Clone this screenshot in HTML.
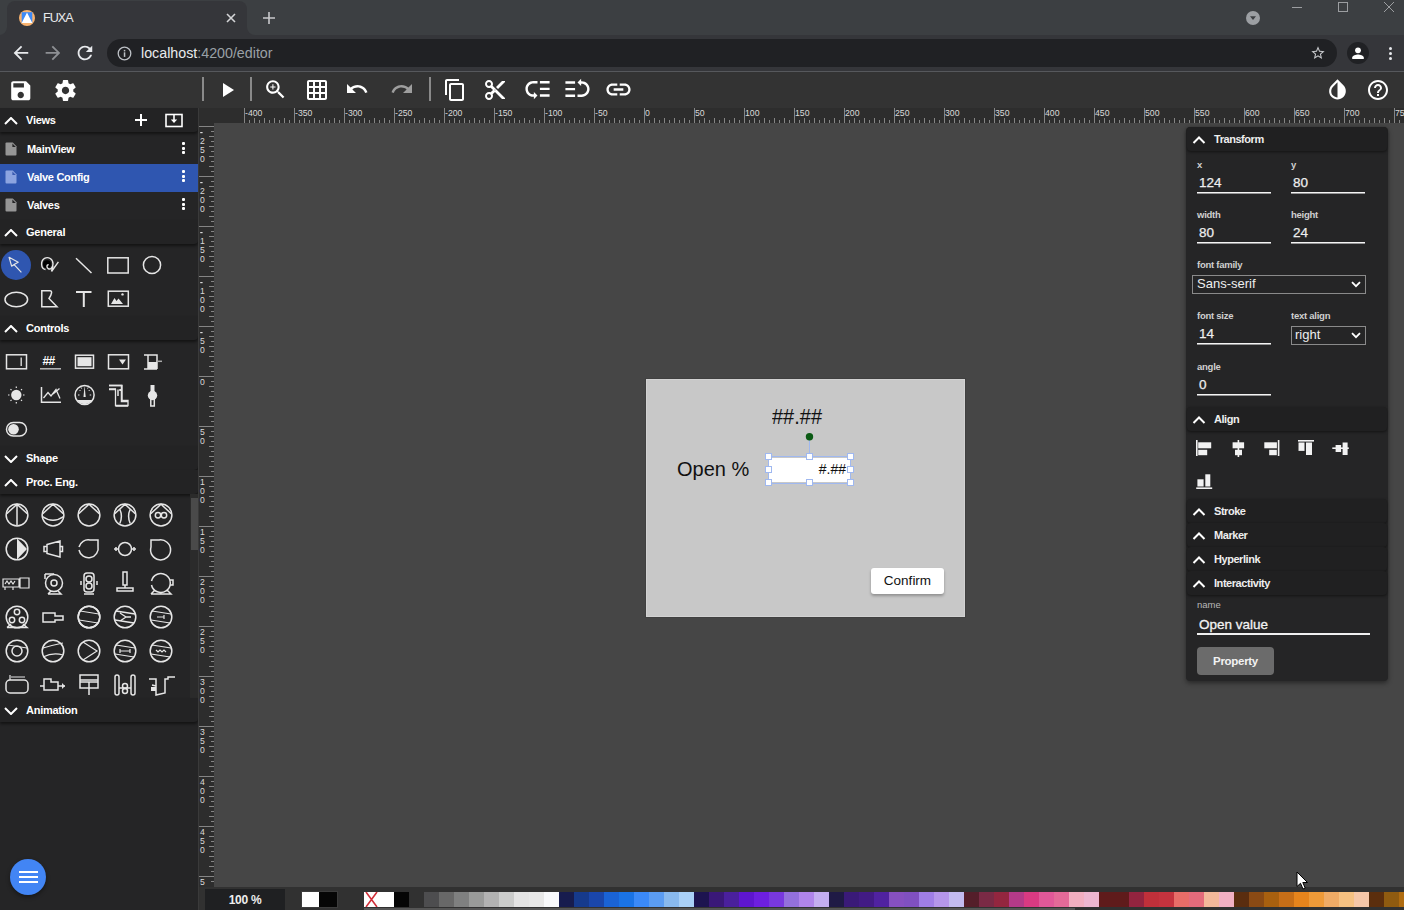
<!DOCTYPE html>
<html><head><meta charset="utf-8">
<style>
*{box-sizing:border-box;margin:0;padding:0}
html,body{width:1404px;height:910px;overflow:hidden;background:#464646;font-family:"Liberation Sans",sans-serif;}
.a{position:absolute}
#tabstrip{left:0;top:0;width:1404px;height:35px;background:#3c3f42}
#tab{left:7px;top:1px;width:240px;height:34px;background:#35363a;border-radius:8px 8px 0 0}
#addrrow{left:0;top:35px;width:1404px;height:36px;background:#35363a}
#omni{left:107px;top:39px;width:1230px;height:28px;background:#202124;border-radius:14px}
#sepline{left:0;top:71px;width:1404px;height:1px;background:#56585c}
#header{left:0;top:72px;width:1404px;height:36px;background:#333333}
#sidebar{left:0;top:108px;width:198px;height:802px;background:#252526}
#vline{left:198px;top:108px;width:1px;height:802px;background:#3c3c3c}
#hruler{left:199px;top:108px;width:1205px;height:15px;background:#2e2e2e}
#vruler{left:199px;top:123px;width:15px;height:765px;background:#2e2e2e}
#bottombar{left:199px;top:888px;width:1205px;height:22px;background:#2e2e2e}
.ico{position:absolute;fill:#fff}
.hdr{position:absolute;left:0;width:198px;height:24px;background:#232324;color:#fff;font-weight:bold;font-size:11px;letter-spacing:-0.25px;box-shadow:0 2px 3px rgba(0,0,0,.5);border-radius:0 0 4px 0}
.hdr span{position:absolute;left:26px;top:6px}
.hdr svg{position:absolute;left:4px;top:6px}
.row{position:absolute;left:0;width:198px;height:28px;color:#fff;font-size:11px;font-weight:bold;letter-spacing:-0.3px}
.row span{position:absolute;left:27px;top:7px}
</style></head><body>

<div id="tabstrip" class="a"></div>
<div id="tab" class="a"></div>
<div id="addrrow" class="a"></div>
<div id="omni" class="a"></div>
<div id="sepline" class="a"></div>

<!-- chrome -->
<svg class="a" style="left:247px;top:27px" width="8" height="8"><path d="M0 0 A8 8 0 0 0 8 8 L0 8Z" fill="#35363a"/></svg>
<svg class="a" style="left:-1px;top:27px" width="8" height="8"><path d="M8 0 A8 8 0 0 1 0 8 L8 8Z" fill="#35363a"/></svg>
<svg class="a" style="left:18px;top:9px" width="18" height="18" viewBox="0 0 18 18">
<circle cx="9" cy="9" r="8" fill="#f9b36f"/>
<rect x="3.7" y="3.2" width="10.6" height="10.8" fill="#3d8af7"/>
<path d="M9 3.6 L14.3 14 L3.7 14Z" fill="#fff"/>
</svg>
<div class="a" style="left:43px;top:11px;font-size:12.6px;color:#e8eaed;letter-spacing:-1px">FUXA</div>
<svg class="a" style="left:226px;top:13px" width="10" height="10" viewBox="0 0 10 10"><path d="M1 1L9 9M9 1L1 9" stroke="#d4d5d7" stroke-width="1.6"/></svg>
<svg class="a" style="left:262px;top:11px" width="14" height="14" viewBox="0 0 14 14"><path d="M7 1V13M1 7H13" stroke="#c8c9cb" stroke-width="1.6"/></svg>
<svg class="a" style="left:1245px;top:10px" width="16" height="16" viewBox="0 0 16 16"><circle cx="8" cy="8" r="7" fill="#9c9fa3"/><path d="M5 6.3H11L8 10Z" fill="#3c3f42"/></svg>
<div class="a" style="left:1292px;top:7px;width:10px;height:1px;background:#9c9ea1"></div>
<div class="a" style="left:1338px;top:2px;width:10px;height:10px;border:1px solid #9c9ea1"></div>
<svg class="a" style="left:1383px;top:1px" width="12" height="12" viewBox="0 0 12 12"><path d="M1 1L11 11M11 1L1 11" stroke="#9c9ea1" stroke-width="1"/></svg>
<!-- nav -->
<svg class="a" style="left:9.85px;top:42.05px" width="21.9" height="21.9" viewBox="0 0 24 24"><path d="M20 11H7.83l5.59-5.59L12 4l-8 8 8 8 1.41-1.41L7.83 13H20v-2z" fill="#e8eaed"/></svg>
<svg class="a" style="left:42.35px;top:42.05px" width="21.9" height="21.9" viewBox="0 0 24 24"><path d="M12 4l-1.41 1.41L16.17 11H4v2h12.17l-5.58 5.59L12 20l8-8z" fill="#8e9094"/></svg>
<svg class="a" style="left:73.95px;top:42.05px" width="21.9" height="21.9" viewBox="0 0 24 24"><path d="M17.65 6.35C16.2 4.9 14.21 4 12 4c-4.42 0-7.99 3.58-7.99 8s3.57 8 7.99 8c3.73 0 6.84-2.55 7.73-6h-2.08c-.82 2.33-3.04 4-5.65 4-3.31 0-6-2.69-6-6s2.69-6 6-6c1.66 0 3.14.69 4.22 1.78L13 11h7V4l-2.35 2.35z" fill="#e8eaed"/></svg>
<svg class="a" style="left:117px;top:46px" width="15" height="15" viewBox="0 0 15 15"><circle cx="7.5" cy="7.5" r="6.3" fill="none" stroke="#bdc1c6" stroke-width="1.3"/><rect x="6.8" y="6.3" width="1.5" height="4.6" fill="#bdc1c6"/><rect x="6.8" y="3.9" width="1.5" height="1.5" fill="#bdc1c6"/></svg>
<div class="a" style="left:141px;top:45px;font-size:14.25px;color:#e8eaed;letter-spacing:0px">localhost<span style="color:#9aa0a6">:4200/editor</span></div>
<svg class="a" style="left:1310px;top:45px" width="16" height="16" viewBox="0 0 24 24"><path d="M22 9.24l-7.19-.62L12 2 9.19 8.63 2 9.24l5.46 4.73L5.82 21 12 17.27 18.18 21l-1.63-7.03L22 9.24zM12 15.4l-3.76 2.27 1-4.28-3.32-2.88 4.38-.38L12 6.1l1.71 4.04 4.38.38-3.32 2.88 1 4.28L12 15.4z" fill="#c6c8cb"/></svg>
<div class="a" style="left:1347px;top:42px;width:22px;height:22px;border-radius:50%;background:#202124"></div>
<svg class="a" style="left:1350px;top:45px" width="16" height="16" viewBox="0 0 16 16"><circle cx="8" cy="5.3" r="2.9" fill="#fff"/><path d="M2.2 12.6c0-2 3.8-3.2 5.8-3.2s5.8 1.2 5.8 3.2V14H2.2z" fill="#fff"/></svg>
<div class="a" style="left:1389px;top:47px;width:3px;height:3px;border-radius:50%;background:#e8eaed"></div>
<div class="a" style="left:1389px;top:52px;width:3px;height:3px;border-radius:50%;background:#e8eaed"></div>
<div class="a" style="left:1389px;top:57px;width:3px;height:3px;border-radius:50%;background:#e8eaed"></div>
<div id="header" class="a"></div>
<!-- header -->
<svg class="a" style="left:8.2px;top:77.8px" width="25.5" height="25.5" viewBox="0 0 24 24"><path d="M17 3H5c-1.11 0-2 .9-2 2v14c0 1.1.89 2 2 2h14c1.1 0 2-.9 2-2V7l-4-4zm-5 16c-1.66 0-3-1.34-3-3s1.34-3 3-3 3 1.34 3 3-1.34 3-3 3zm3-10H5V5h10v4z" fill="#fff" /></svg>
<svg class="a" style="left:52.5px;top:77.5px" width="25" height="25" viewBox="0 0 24 24"><path d="M19.43 12.98c.04-.32.07-.64.07-.98s-.03-.66-.07-.98l2.11-1.65c.19-.15.24-.42.12-.64l-2-3.46c-.12-.22-.39-.3-.61-.22l-2.49 1c-.52-.4-1.08-.73-1.69-.98l-.38-2.65C14.46 2.18 14.25 2 14 2h-4c-.25 0-.46.18-.49.42l-.38 2.65c-.61.25-1.17.59-1.69.98l-2.49-1c-.23-.09-.49 0-.61.22l-2 3.46c-.13.22-.07.49.12.64l2.11 1.65c-.04.32-.07.65-.07.98s.03.66.07.98l-2.11 1.65c-.19.15-.24.42-.12.64l2 3.46c.12.22.39.3.61.22l2.49-1c.52.4 1.08.73 1.69.98l.38 2.65c.03.24.24.42.49.42h4c.25 0 .46-.18.49-.42l.38-2.65c.61-.25 1.17-.59 1.69-.98l2.49 1c.23.09.49 0 .61-.22l2-3.46c.12-.22.07-.49-.12-.64l-2.11-1.65zM12 15.5c-1.93 0-3.5-1.57-3.5-3.5s1.57-3.5 3.5-3.5 3.5 1.57 3.5 3.5-1.57 3.5-3.5 3.5z" fill="#fff" /></svg>
<div class="a" style="left:202px;top:77px;width:2px;height:24px;background:#8a8a8a"></div>
<svg class="a" style="left:215px;top:78px" width="24" height="24" viewBox="0 0 24 24"><path d="M8 5v14l11-7z" fill="#fff" /></svg>
<div class="a" style="left:250px;top:77px;width:2px;height:24px;background:#8a8a8a"></div>
<svg class="a" style="left:263px;top:77px" width="25" height="25" viewBox="0 0 24 24"><path d="M15.5 14h-.79l-.28-.27C15.41 12.59 16 11.11 16 9.5 16 5.91 13.09 3 9.5 3S3 5.91 3 9.5 5.91 16 9.5 16c1.61 0 3.09-.59 4.23-1.57l.27.28v.79l5 4.99L20.49 19l-4.99-5zm-6 0C7.01 14 5 11.990 5 9.5S7.01 5 9.5 5 14 7.01 14 9.5 11.99 14 9.5 14zm2.5-4h-2v2H9v-2H7V9h2V7h1v2h2v1z" fill="#fff" /></svg>
<svg class="a" style="left:305px;top:78px" width="24" height="24" viewBox="0 0 24 24"><path d="M20 2H4c-1.1 0-2 .9-2 2v16c0 1.1.9 2 2 2h16c1.1 0 2-.9 2-2V4c0-1.1-.9-2-2-2zM8 20H4v-4h4v4zm0-6H4v-4h4v4zm0-6H4V4h4v4zm6 12h-4v-4h4v4zm0-6h-4v-4h4v4zm0-6h-4V4h4v4zm6 12h-4v-4h4v4zm0-6h-4v-4h4v4zm0-6h-4V4h4v4z" fill="#fff" /></svg>
<svg class="a" style="left:345px;top:77px" width="24" height="24" viewBox="0 0 24 24"><path d="M12.5 8c-2.65 0-5.05.99-6.9 2.6L2 7v9h9l-3.62-3.62c1.39-1.16 3.16-1.88 5.12-1.88 3.54 0 6.55 2.31 7.6 5.5l2.37-.78C21.08 11.03 17.15 8 12.5 8z" fill="#fff" /></svg>
<svg class="a" style="left:390px;top:77px" width="24" height="24" viewBox="0 0 24 24"><path d="M18.4 10.6C16.55 8.99 14.15 8 11.5 8c-4.65 0-8.58 3.03-9.96 7.22L3.9 16c1.05-3.19 4.05-5.5 7.6-5.5 1.95 0 3.73.72 5.12 1.88L13 16h9V7l-3.6 3.6z" fill="#9e9e9e" /></svg>
<div class="a" style="left:429px;top:77px;width:2px;height:24px;background:#8a8a8a"></div>
<svg class="a" style="left:443px;top:78px" width="24" height="24" viewBox="0 0 24 24"><path d="M16 1H4c-1.1 0-2 .9-2 2v14h2V3h12V1zm3 4H8c-1.1 0-2 .9-2 2v14c0 1.1.9 2 2 2h11c1.1 0 2-.9 2-2V7c0-1.1-.9-2-2-2zm0 16H8V7h11v14z" fill="#fff" /></svg>
<svg class="a" style="left:483px;top:78px" width="24" height="24" viewBox="0 0 24 24"><path d="M9.64 7.64c.23-.5.36-1.05.36-1.64 0-2.21-1.79-4-4-4S2 3.79 2 6s1.79 4 4 4c.59 0 1.14-.13 1.64-.36L10 12l-2.36 2.36C7.14 14.13 6.59 14 6 14c-2.21 0-4 1.79-4 4s1.79 4 4 4 4-1.79 4-4c0-.59-.13-1.14-.36-1.64L12 14l7 7h3v-1L9.64 7.64zM6 8c-1.1 0-2-.89-2-2s.9-2 2-2 2 .89 2 2-.9 2-2 2zm0 12c-1.1 0-2-.89-2-2s.9-2 2-2 2 .89 2 2-.9 2-2 2zm6-7.5c-.28 0-.5-.22-.5-.5s.22-.5.5-.5.5.22.5.5-.22.5-.5.5zM19 3l-6 6 2 2 7-7V3z" fill="#fff" /></svg>
<svg class="a" style="left:523px;top:75px" width="29" height="29" viewBox="0 0 24 24"><path d="M14 5h8v2h-8zm0 5.5h8v2h-8zm0 5.5h8v2h-8zM2 11.5C2 15.08 4.92 18 8.5 18H9v2l3-3-3-3v2h-.5C6.02 16 4 13.98 4 11.5S6.02 7 8.5 7H12V5H8.5C4.92 5 2 7.92 2 11.5z" fill="#fff" /></svg>
<svg class="a" style="left:563px;top:74px;transform:rotate(180deg)" width="29" height="29" viewBox="0 0 24 24"><path d="M14 5h8v2h-8zm0 5.5h8v2h-8zm0 5.5h8v2h-8zM2 11.5C2 15.08 4.92 18 8.5 18H9v2l3-3-3-3v2h-.5C6.02 16 4 13.98 4 11.5S6.02 7 8.5 7H12V5H8.5C4.92 5 2 7.92 2 11.5z" fill="#fff"/></svg>
<svg class="a" style="left:604px;top:75px" width="29" height="29" viewBox="0 0 24 24"><path d="M3.9 12c0-1.71 1.39-3.1 3.1-3.1h4V7H7c-2.76 0-5 2.24-5 5s2.240 5 5 5h4v-1.9H7c-1.71 0-3.1-1.39-3.1-3.1zM8 13h8v-2H8v2zm9-6h-4v1.9h4c1.71 0 3.1 1.39 3.1 3.1s-1.39 3.1-3.1 3.1h-4V17h4c2.76 0 5-2.24 5-5s-2.24-5-5-5z" fill="#fff" /></svg>
<svg class="a" style="left:1325px;top:77px" width="25" height="25" viewBox="0 0 24 24"><path d="M17.66 7.93L12 2.27 6.34 7.93c-3.12 3.12-3.12 8.19 0 11.31C7.9 20.8 9.95 21.58 12 21.58c2.05 0 4.1-.78 5.66-2.34 3.12-3.12 3.12-8.19 0-11.31zM12 19.59c-1.6 0-3.11-.62-4.24-1.76C6.62 16.69 6 15.19 6 13.59s.62-3.11 1.76-4.24L12 5.1v14.49z" fill="#fff" /></svg>
<svg class="a" style="left:1366px;top:78px" width="24" height="24" viewBox="0 0 24 24"><path d="M11 18h2v-2h-2v2zm1-16C6.48 2 2 6.48 2 12s4.48 10 10 10 10-4.48 10-10S17.52 2 12 2zm0 18c-4.41 0-8-3.59-8-8s3.59-8 8-8 8 3.59 8 8-3.59 8-8 8zm0-14c-2.21 0-4 1.79-4 4h2c0-1.1.9-2 2-2s2 .9 2 2c0 2-3 1.75-3 5h2c0-2.25 3-2.5 3-5 0-2.21-1.79-4-4-4z" fill="#fff" /></svg>
<!-- sidebar -->
<div id="sidebar" class="a"></div>
<div class="a hdr" style="top:108px"><svg class="a" style="left:0;top:9px" width="22" height="8" viewBox="0 0 22 8"><path d="M5 7 L11 1 L17 7" fill="none" stroke="#fff" stroke-width="2"/></svg><span>Views</span><svg class="a" style="left:134px;top:5px" width="14" height="14" viewBox="0 0 14 14"><path d="M7 1V13M1 7H13" stroke="#fff" stroke-width="2"/></svg><svg class="a" style="left:164px;top:5px" width="20" height="15" viewBox="0 0 20 15"><rect x="2" y="1.5" width="16" height="12" fill="none" stroke="#fff" stroke-width="1.6"/><path d="M10 1V9" stroke="#fff" stroke-width="1.6"/><path d="M6.8 6.5H13.2L10 10Z" fill="#fff"/></svg></div>
<div class="row" style="top:136px;"><svg class="a" style="left:5px;top:6px" width="12" height="14" viewBox="0 0 12 14"><path d="M1.5 0.5H7.8L11.5 4.2V12.5Q11.5 13.5 10.5 13.5H1.5Q0.5 13.5 0.5 12.5V1.5Q0.5 0.5 1.5 0.5Z" fill="#959595"/><path d="M7.4 1.6V5.1H10.9Z" fill="#252526"/></svg><span>MainView</span><div class="a" style="left:181px;top:6px;width:4px;height:15px"><i class="a" style="left:0.5px;top:0;width:3px;height:3px;background:#fff;border-radius:1px"></i><i class="a" style="left:0.5px;top:4.5px;width:3px;height:3px;background:#fff;border-radius:1px"></i><i class="a" style="left:0.5px;top:9px;width:3px;height:3px;background:#fff;border-radius:1px"></i></div></div>
<div class="row" style="top:164px;background:#2f56b0;"><svg class="a" style="left:5px;top:6px" width="12" height="14" viewBox="0 0 12 14"><path d="M1.5 0.5H7.8L11.5 4.2V12.5Q11.5 13.5 10.5 13.5H1.5Q0.5 13.5 0.5 12.5V1.5Q0.5 0.5 1.5 0.5Z" fill="#8ca4e0"/><path d="M7.4 1.6V5.1H10.9Z" fill="#3a5bb0"/></svg><span>Valve Config</span><div class="a" style="left:181px;top:6px;width:4px;height:15px"><i class="a" style="left:0.5px;top:0;width:3px;height:3px;background:#fff;border-radius:1px"></i><i class="a" style="left:0.5px;top:4.5px;width:3px;height:3px;background:#fff;border-radius:1px"></i><i class="a" style="left:0.5px;top:9px;width:3px;height:3px;background:#fff;border-radius:1px"></i></div></div>
<div class="row" style="top:192px;"><svg class="a" style="left:5px;top:6px" width="12" height="14" viewBox="0 0 12 14"><path d="M1.5 0.5H7.8L11.5 4.2V12.5Q11.5 13.5 10.5 13.5H1.5Q0.5 13.5 0.5 12.5V1.5Q0.5 0.5 1.5 0.5Z" fill="#959595"/><path d="M7.4 1.6V5.1H10.9Z" fill="#252526"/></svg><span>Valves</span><div class="a" style="left:181px;top:6px;width:4px;height:15px"><i class="a" style="left:0.5px;top:0;width:3px;height:3px;background:#fff;border-radius:1px"></i><i class="a" style="left:0.5px;top:4.5px;width:3px;height:3px;background:#fff;border-radius:1px"></i><i class="a" style="left:0.5px;top:9px;width:3px;height:3px;background:#fff;border-radius:1px"></i></div></div>
<div class="a hdr" style="top:220px"><svg class="a" style="left:0;top:9px" width="22" height="8" viewBox="0 0 22 8"><path d="M5 7 L11 1 L17 7" fill="none" stroke="#fff" stroke-width="2"/></svg><span>General</span></div>
<div class="a" style="left:1px;top:250px;width:30px;height:30px;border-radius:50%;background:#2f56b0"></div>
<svg class="a" style="left:0;top:248px" width="170" height="68" viewBox="0 0 170 68"><path d="M9.1 9.3 L11.6 18.2 L14.1 16.6 L18.2 14.3 Z M14.1 16.6 L21.4 24.3" fill="none" stroke="#e6e6e6" stroke-width="1.2" stroke-linejoin="round"/><circle cx="47" cy="16.2" r="4" fill="#000"/><path d="M45.5 21.5 C40.5 21 40.5 12.5 44.5 10.3 C48.5 8.3 53 11 53 15.8 C53 20 50.3 22 48.2 20.6 C46.3 19.3 46.6 16.5 48.6 16.7" fill="none" stroke="#e6e6e6" stroke-width="1.4"/><path d="M51.5 23.5 L58.4 13.8 M51.5 23.5 L52.8 18" fill="none" stroke="#e6e6e6" stroke-width="1.4"/><path d="M76 10.3 L91.5 25" fill="none" stroke="#e6e6e6" stroke-width="1.5"/><rect x="107.8" y="9.8" width="20.4" height="15.2" fill="none" stroke="#e6e6e6" stroke-width="1.5"/><circle cx="152" cy="17" r="8.6" fill="none" stroke="#e6e6e6" stroke-width="1.5"/><ellipse cx="16.3" cy="51.5" rx="11.3" ry="7.2" fill="none" stroke="#e6e6e6" stroke-width="1.5"/><path d="M41.8 42.8 H50 C52.5 42.8 52 46 49 50.5 L57 58.8 H41.8 Z" fill="none" stroke="#e6e6e6" stroke-width="1.5"/><path d="M76 44 H91.5 M83.8 44 V59" fill="none" stroke="#e6e6e6" stroke-width="2"/><rect x="108.3" y="43.2" width="20" height="15" fill="none" stroke="#e6e6e6" stroke-width="1.5"/><path d="M111 56 L114.5 50 L116.5 53 L118.5 50.5 L123 56Z" fill="#e6e6e6"/><circle cx="122.5" cy="46.4" r="1.2" fill="#e6e6e6"/></svg>
<div class="a hdr" style="top:316px"><svg class="a" style="left:0;top:9px" width="22" height="8" viewBox="0 0 22 8"><path d="M5 7 L11 1 L17 7" fill="none" stroke="#fff" stroke-width="2"/></svg><span>Controls</span></div>
<svg class="a" style="left:0;top:340px" width="170" height="105" viewBox="0 0 170 105"><rect x="6.5" y="14.8" width="20" height="14" fill="none" stroke="#e6e6e6" stroke-width="1.5"/><path d="M21.2 17.5V26" stroke="#e6e6e6" stroke-width="1.3"/><text x="42.5" y="25.2" font-family="Liberation Sans" font-weight="bold" font-size="12" fill="#fff" letter-spacing="-0.6">##</text><path d="M40 28.8H61" stroke="#bbb" stroke-width="1.5"/><rect x="75.5" y="15.2" width="18" height="13" fill="none" stroke="#e6e6e6" stroke-width="1.5"/><rect x="77.5" y="17.2" width="14" height="9" fill="#e6e6e6"/><rect x="108.5" y="14.8" width="20" height="14" fill="none" stroke="#e6e6e6" stroke-width="1.5"/><path d="M119 19.5H126L122.5 24.5Z" fill="#e6e6e6"/><path d="M144 15H157V29M144 29H157" fill="none" stroke="#e6e6e6" stroke-width="1.5"/><rect x="148" y="22" width="9" height="7" fill="#e6e6e6"/><path d="M157 21.3H162" stroke="#aaa" stroke-width="1.5"/><path d="M148 15V29" fill="none" stroke="#e6e6e6" stroke-width="1.5"/><circle cx="16.3" cy="55" r="5.2" fill="#e6e6e6"/><path d="M16.3 46.5V48M16.3 62V63.5M8 55H9.5M23 55H24.5M10.5 49.2L11.5 50.2M21 59.8L22 60.8M22 49.2L21 50.2M11.5 59.8L10.5 60.8" stroke="#e6e6e6" stroke-width="1.2"/><path d="M41.5 47V62.3H61" fill="none" stroke="#e6e6e6" stroke-width="1.5"/><path d="M43.5 58L48 52.5L51 56L56 49.5L60 58.5M53 54L59.5 48.5" fill="none" stroke="#e6e6e6" stroke-width="1.3"/><circle cx="84.6" cy="55" r="9.5" fill="none" stroke="#e6e6e6" stroke-width="1.5"/><path d="M76.8 60 A9.3 9.3 0 0 0 92.4 60Z" fill="#e6e6e6"/><path d="M78 55H79.5M89.7 55H91.2M79.5 50L80.5 51M89.7 50L88.7 51M81 47.3L81.6 48.6M88.2 47.3L87.6 48.6" stroke="#e6e6e6" stroke-width="1"/><path d="M83.5 57 L84.6 45.5 L85.7 57Z" fill="#e6e6e6"/><path d="M109 45.5H121.5V61.5H128M112 49H116M118 49.5V56M120 49V51M115.5 66H128M109 49H113" fill="none" stroke="#e6e6e6" stroke-width="1.5"/><path d="M109 45.5 H122 V60.5 H128 V65.5 H115.5 V49.5 H109" fill="none" stroke="#e6e6e6" stroke-width="1.3"/><rect x="150.5" y="45" width="4" height="8" fill="#e6e6e6"/><circle cx="152.5" cy="55.5" r="4.7" fill="#e6e6e6"/><rect x="150.8" y="59" width="3.5" height="7" fill="none" stroke="#e6e6e6" stroke-width="1.5"/><rect x="6.5" y="82.5" width="20" height="13.5" rx="6.75" fill="none" stroke="#e6e6e6" stroke-width="1.5"/><circle cx="13.5" cy="89.2" r="5.3" fill="#e6e6e6"/></svg>
<div class="a hdr" style="top:446px"><svg class="a" style="left:0;top:9px" width="22" height="8" viewBox="0 0 22 8"><path d="M5 1 L11 7 L17 1" fill="none" stroke="#fff" stroke-width="2"/></svg><span>Shape</span></div>
<div class="a hdr" style="top:470px"><svg class="a" style="left:0;top:9px" width="22" height="8" viewBox="0 0 22 8"><path d="M5 7 L11 1 L17 7" fill="none" stroke="#fff" stroke-width="2"/></svg><span>Proc. Eng.</span></div>
<svg class="a" style="left:0;top:494px" width="190" height="204" viewBox="0 494 190 204"><circle cx="17" cy="515" r="10.9" fill="none" stroke="#e6e6e6" stroke-width="1.5"/><path d="M17 504.5V525.5M6.699999999999999 513.8L17 504.2L27.3 513.8" fill="none" stroke="#e6e6e6" stroke-width="1.5"/><circle cx="53" cy="515" r="10.9" fill="none" stroke="#e6e6e6" stroke-width="1.5"/><path d="M42.4 516.5Q53 524 63.6 516.5M42.7 513.8L53 504.2L63.3 513.8" fill="none" stroke="#e6e6e6" stroke-width="1.5"/><circle cx="89" cy="515" r="10.9" fill="none" stroke="#e6e6e6" stroke-width="1.5"/><path d="M78.7 513.8L89 504.2L99.3 513.8" fill="none" stroke="#e6e6e6" stroke-width="1.5"/><circle cx="125" cy="515" r="10.9" fill="none" stroke="#e6e6e6" stroke-width="1.5"/><path d="M114.7 513.8L125 504.2L135.3 513.8M119.8 509.2Q123 516 119.8 523.5M130.2 509.2Q127 516 130.2 523.5" fill="none" stroke="#e6e6e6" stroke-width="1.5"/><circle cx="161" cy="515" r="10.9" fill="none" stroke="#e6e6e6" stroke-width="1.5"/><circle cx="158" cy="515.3" r="2.7" fill="none" stroke="#e6e6e6" stroke-width="1.5"/><circle cx="164" cy="515.3" r="2.7" fill="none" stroke="#e6e6e6" stroke-width="1.5"/><path d="M150.7 513.8L161 504.2L171.3 513.8" fill="none" stroke="#e6e6e6" stroke-width="1.5"/><circle cx="17" cy="549" r="10.8" fill="none" stroke="#e6e6e6" stroke-width="1.5"/><path d="M17 538.5V559.5L27 549Z" fill="#e6e6e6"/><path d="M47 544.5L60 541V557L47 553.5Z M44 546.5H47V551.5H44Z M60 546.5H62.5V551.5H60" fill="none" stroke="#e6e6e6" stroke-width="1.5"/><path d="M79 550A9.5 9.5 0 1 0 98 546V540H90A9.5 9.5 0 0 0 79 547" fill="none" stroke="#e6e6e6" stroke-width="1.5"/><circle cx="125" cy="549" r="6.5" fill="none" stroke="#e6e6e6" stroke-width="1.5"/><path d="M114 549H118.5M131.5 549H136M116 547V551M134 547V551" fill="none" stroke="#e6e6e6" stroke-width="1.5"/><path d="M151 540H159A10 10 0 1 1 151 547Z" fill="none" stroke="#e6e6e6" stroke-width="1.5"/><path d="M3 579H19V587H3Z M20 578H29V588H20Z M5 584L7 581L9 584L11 581L13 584L15 581 M5 587V590M13 587V590" fill="none" stroke="#e6e6e6" stroke-width="1.2"/><circle cx="54" cy="583" r="8.5" fill="none" stroke="#e6e6e6" stroke-width="1.5"/><circle cx="54" cy="583" r="3" fill="none" stroke="#e6e6e6" stroke-width="1.5"/><path d="M45 574H54M45 574V579M48 594H61L58 591M48 594L51 591" fill="none" stroke="#e6e6e6" stroke-width="1.5"/><rect x="84" y="573" width="10" height="19" rx="3" fill="none" stroke="#e6e6e6" stroke-width="1.5"/><circle cx="89" cy="579" r="3" fill="none" stroke="#e6e6e6" stroke-width="1.5"/><circle cx="89" cy="586" r="3" fill="none" stroke="#e6e6e6" stroke-width="1.5"/><path d="M81 581V585M97 581V585M84 594H94" fill="none" stroke="#e6e6e6" stroke-width="1.5"/><rect x="123" y="572" width="4" height="13" fill="none" stroke="#e6e6e6" stroke-width="1.5"/><path d="M117 588H133V591H117Z M125 585V588" fill="none" stroke="#e6e6e6" stroke-width="1.5"/><path d="M151.5 585A9.5 9.5 0 1 0 151.5 581M170 580H173V585H170M151 594H171L167 590M151 594L155 590" fill="none" stroke="#e6e6e6" stroke-width="1.5"/><circle cx="17" cy="617" r="10.8" fill="none" stroke="#e6e6e6" stroke-width="1.5"/><circle cx="17" cy="612" r="2.7" fill="none" stroke="#e6e6e6" stroke-width="1.5"/><circle cx="12" cy="620" r="2.7" fill="none" stroke="#e6e6e6" stroke-width="1.5"/><circle cx="22" cy="620" r="2.7" fill="none" stroke="#e6e6e6" stroke-width="1.5"/><path d="M7 627.5H27L23 624M7 627.5L11 624" fill="none" stroke="#e6e6e6" stroke-width="1.5"/><path d="M43 613H55V616H63V620H55V622H43Z" fill="none" stroke="#e6e6e6" stroke-width="1.5"/><circle cx="89" cy="617" r="10.8" fill="none" stroke="#e6e6e6" stroke-width="1.5"/><circle cx="89" cy="617" r="10.8" fill="none" stroke="#e6e6e6" stroke-width="1.5"/><path d="M80 611L99 614M79 620L98 623" fill="none" stroke="#e6e6e6" stroke-width="1"/><circle cx="125" cy="617" r="10.8" fill="none" stroke="#e6e6e6" stroke-width="1.5"/><path d="M116 611L135 614M115 620L134 623M120 613L126 617L120 621M126 617H131" fill="none" stroke="#e6e6e6" stroke-width="1.3"/><circle cx="161" cy="617" r="10.8" fill="none" stroke="#e6e6e6" stroke-width="1.5"/><path d="M152 611L171 614M151 620L170 623M157 617H164M164 615V619" fill="none" stroke="#e6e6e6" stroke-width="1.2"/><circle cx="17" cy="651" r="10.8" fill="none" stroke="#e6e6e6" stroke-width="1.5"/><circle cx="17" cy="651" r="5" fill="none" stroke="#e6e6e6" stroke-width="1.5"/><path d="M8 645L27 648" fill="none" stroke="#e6e6e6" stroke-width="1"/><circle cx="53" cy="651" r="10.8" fill="none" stroke="#e6e6e6" stroke-width="1.5"/><path d="M43 648Q53 645 63 643M43 657Q53 652 63 655" fill="none" stroke="#e6e6e6" stroke-width="1.2"/><circle cx="89" cy="651" r="10.8" fill="none" stroke="#e6e6e6" stroke-width="1.5"/><path d="M83 642L97 651L83 660" fill="none" stroke="#e6e6e6" stroke-width="1.2"/><circle cx="125" cy="651" r="10.8" fill="none" stroke="#e6e6e6" stroke-width="1.5"/><path d="M116 645L135 648M115 654L134 657M120 651H130M120 649V653M130 649V653" fill="none" stroke="#e6e6e6" stroke-width="1.2"/><circle cx="161" cy="651" r="10.8" fill="none" stroke="#e6e6e6" stroke-width="1.5"/><path d="M152 645L171 648M151 654L170 657M156 650L158 652L160 650L162 652L164 650L166 652" fill="none" stroke="#e6e6e6" stroke-width="1.2"/><rect x="6" y="680" width="22" height="13" rx="4" fill="none" stroke="#e6e6e6" stroke-width="1.5"/><path d="M10 680V675M11 677H25" fill="none" stroke="#e6e6e6" stroke-width="1.2"/><path d="M44 679H51V682H58V690H44Z M40 686H44M58 686H65" fill="none" stroke="#e6e6e6" stroke-width="1.5"/><path d="M62 683L65 686L62 689Z" fill="#e6e6e6"/><path d="M80 675H98V688H80Z M80 680H98M80 682H98M89 682V695" fill="none" stroke="#e6e6e6" stroke-width="1.5"/><rect x="115" y="675" width="4" height="20" rx="2" fill="none" stroke="#e6e6e6" stroke-width="1.5"/><rect x="131" y="675" width="4" height="20" rx="2" fill="none" stroke="#e6e6e6" stroke-width="1.5"/><circle cx="125" cy="686" r="2.5" fill="none" stroke="#e6e6e6" stroke-width="1.5"/><circle cx="125" cy="691" r="2.5" fill="none" stroke="#e6e6e6" stroke-width="1.5"/><path d="M119 688H131" fill="none" stroke="#e6e6e6" stroke-width="1.5"/><path d="M149 679H156V682M156 679V695L165 693V679H168V677H175M152 685L156 686" fill="none" stroke="#e6e6e6" stroke-width="1.5"/><path d="M151 687H156V691H151Z" fill="#e6e6e6"/></svg>
<div class="a" style="left:190px;top:494px;width:8px;height:204px;background:#2b2b2b"></div>
<div class="a" style="left:191px;top:498px;width:7px;height:52px;background:#4a4a4a"></div>
<div class="a hdr" style="top:698px"><svg class="a" style="left:0;top:9px" width="22" height="8" viewBox="0 0 22 8"><path d="M5 1 L11 7 L17 1" fill="none" stroke="#fff" stroke-width="2"/></svg><span>Animation</span></div>
<div class="a" style="left:10px;top:859px;width:36px;height:36px;border-radius:50%;background:#4285f4;box-shadow:0 2px 4px rgba(0,0,0,.4)"></div>
<div class="a" style="left:19px;top:871px;width:19px;height:2px;background:#fff"></div><div class="a" style="left:19px;top:876px;width:19px;height:2px;background:#fff"></div><div class="a" style="left:19px;top:881px;width:19px;height:2px;background:#fff"></div>
<div class="a" style="left:198px;top:108px;width:1px;height:802px;background:#3a3a3a"></div>
<svg class="a" style="left:199px;top:108px" width="1205" height="15" viewBox="199 108 1205 15"><rect x="199" y="108" width="1205" height="15" fill="#2d2d2d"/><path d="M244.5 108V123M249.5 120V123M254.5 118V123M259.5 120V123M264.5 118V123M269.5 120V123M274.5 118V123M279.5 120V123M284.5 118V123M289.5 120V123M294.5 108V123M299.5 120V123M304.5 118V123M309.5 120V123M314.5 118V123M319.5 120V123M324.5 118V123M329.5 120V123M334.5 118V123M339.5 120V123M344.5 108V123M349.5 120V123M354.5 118V123M359.5 120V123M364.5 118V123M369.5 120V123M374.5 118V123M379.5 120V123M384.5 118V123M389.5 120V123M394.5 108V123M399.5 120V123M404.5 118V123M409.5 120V123M414.5 118V123M419.5 120V123M424.5 118V123M429.5 120V123M434.5 118V123M439.5 120V123M444.5 108V123M449.5 120V123M454.5 118V123M459.5 120V123M464.5 118V123M469.5 120V123M474.5 118V123M479.5 120V123M484.5 118V123M489.5 120V123M494.5 108V123M499.5 120V123M504.5 118V123M509.5 120V123M514.5 118V123M519.5 120V123M524.5 118V123M529.5 120V123M534.5 118V123M539.5 120V123M544.5 108V123M549.5 120V123M554.5 118V123M559.5 120V123M564.5 118V123M569.5 120V123M574.5 118V123M579.5 120V123M584.5 118V123M589.5 120V123M594.5 108V123M599.5 120V123M604.5 118V123M609.5 120V123M614.5 118V123M619.5 120V123M624.5 118V123M629.5 120V123M634.5 118V123M639.5 120V123M644.5 108V123M649.5 120V123M654.5 118V123M659.5 120V123M664.5 118V123M669.5 120V123M674.5 118V123M679.5 120V123M684.5 118V123M689.5 120V123M694.5 108V123M699.5 120V123M704.5 118V123M709.5 120V123M714.5 118V123M719.5 120V123M724.5 118V123M729.5 120V123M734.5 118V123M739.5 120V123M744.5 108V123M749.5 120V123M754.5 118V123M759.5 120V123M764.5 118V123M769.5 120V123M774.5 118V123M779.5 120V123M784.5 118V123M789.5 120V123M794.5 108V123M799.5 120V123M804.5 118V123M809.5 120V123M814.5 118V123M819.5 120V123M824.5 118V123M829.5 120V123M834.5 118V123M839.5 120V123M844.5 108V123M849.5 120V123M854.5 118V123M859.5 120V123M864.5 118V123M869.5 120V123M874.5 118V123M879.5 120V123M884.5 118V123M889.5 120V123M894.5 108V123M899.5 120V123M904.5 118V123M909.5 120V123M914.5 118V123M919.5 120V123M924.5 118V123M929.5 120V123M934.5 118V123M939.5 120V123M944.5 108V123M949.5 120V123M954.5 118V123M959.5 120V123M964.5 118V123M969.5 120V123M974.5 118V123M979.5 120V123M984.5 118V123M989.5 120V123M994.5 108V123M999.5 120V123M1004.5 118V123M1009.5 120V123M1014.5 118V123M1019.5 120V123M1024.5 118V123M1029.5 120V123M1034.5 118V123M1039.5 120V123M1044.5 108V123M1049.5 120V123M1054.5 118V123M1059.5 120V123M1064.5 118V123M1069.5 120V123M1074.5 118V123M1079.5 120V123M1084.5 118V123M1089.5 120V123M1094.5 108V123M1099.5 120V123M1104.5 118V123M1109.5 120V123M1114.5 118V123M1119.5 120V123M1124.5 118V123M1129.5 120V123M1134.5 118V123M1139.5 120V123M1144.5 108V123M1149.5 120V123M1154.5 118V123M1159.5 120V123M1164.5 118V123M1169.5 120V123M1174.5 118V123M1179.5 120V123M1184.5 118V123M1189.5 120V123M1194.5 108V123M1199.5 120V123M1204.5 118V123M1209.5 120V123M1214.5 118V123M1219.5 120V123M1224.5 118V123M1229.5 120V123M1234.5 118V123M1239.5 120V123M1244.5 108V123M1249.5 120V123M1254.5 118V123M1259.5 120V123M1264.5 118V123M1269.5 120V123M1274.5 118V123M1279.5 120V123M1284.5 118V123M1289.5 120V123M1294.5 108V123M1299.5 120V123M1304.5 118V123M1309.5 120V123M1314.5 118V123M1319.5 120V123M1324.5 118V123M1329.5 120V123M1334.5 118V123M1339.5 120V123M1344.5 108V123M1349.5 120V123M1354.5 118V123M1359.5 120V123M1364.5 118V123M1369.5 120V123M1374.5 118V123M1379.5 120V123M1384.5 118V123M1389.5 120V123M1394.5 108V123M1399.5 120V123" stroke="#858585" stroke-width="1"/><text x="245" y="116.2" font-family="Liberation Sans" font-size="8.7" fill="#dadada">-400</text><text x="295" y="116.2" font-family="Liberation Sans" font-size="8.7" fill="#dadada">-350</text><text x="345" y="116.2" font-family="Liberation Sans" font-size="8.7" fill="#dadada">-300</text><text x="395" y="116.2" font-family="Liberation Sans" font-size="8.7" fill="#dadada">-250</text><text x="445" y="116.2" font-family="Liberation Sans" font-size="8.7" fill="#dadada">-200</text><text x="495" y="116.2" font-family="Liberation Sans" font-size="8.7" fill="#dadada">-150</text><text x="545" y="116.2" font-family="Liberation Sans" font-size="8.7" fill="#dadada">-100</text><text x="595" y="116.2" font-family="Liberation Sans" font-size="8.7" fill="#dadada">-50</text><text x="645" y="116.2" font-family="Liberation Sans" font-size="8.7" fill="#dadada">0</text><text x="695" y="116.2" font-family="Liberation Sans" font-size="8.7" fill="#dadada">50</text><text x="745" y="116.2" font-family="Liberation Sans" font-size="8.7" fill="#dadada">100</text><text x="795" y="116.2" font-family="Liberation Sans" font-size="8.7" fill="#dadada">150</text><text x="845" y="116.2" font-family="Liberation Sans" font-size="8.7" fill="#dadada">200</text><text x="895" y="116.2" font-family="Liberation Sans" font-size="8.7" fill="#dadada">250</text><text x="945" y="116.2" font-family="Liberation Sans" font-size="8.7" fill="#dadada">300</text><text x="995" y="116.2" font-family="Liberation Sans" font-size="8.7" fill="#dadada">350</text><text x="1045" y="116.2" font-family="Liberation Sans" font-size="8.7" fill="#dadada">400</text><text x="1095" y="116.2" font-family="Liberation Sans" font-size="8.7" fill="#dadada">450</text><text x="1145" y="116.2" font-family="Liberation Sans" font-size="8.7" fill="#dadada">500</text><text x="1195" y="116.2" font-family="Liberation Sans" font-size="8.7" fill="#dadada">550</text><text x="1245" y="116.2" font-family="Liberation Sans" font-size="8.7" fill="#dadada">600</text><text x="1295" y="116.2" font-family="Liberation Sans" font-size="8.7" fill="#dadada">650</text><text x="1345" y="116.2" font-family="Liberation Sans" font-size="8.7" fill="#dadada">700</text><text x="1395" y="116.2" font-family="Liberation Sans" font-size="8.7" fill="#dadada">750</text></svg>
<svg class="a" style="left:199px;top:123px" width="15" height="764" viewBox="199 123 15 764"><rect x="199" y="123" width="15" height="764" fill="#2d2d2d"/><path d="M199 126.5H214M211 131.5H214M209 136.5H214M211 141.5H214M209 146.5H214M211 151.5H214M209 156.5H214M211 161.5H214M209 166.5H214M211 171.5H214M199 176.5H214M211 181.5H214M209 186.5H214M211 191.5H214M209 196.5H214M211 201.5H214M209 206.5H214M211 211.5H214M209 216.5H214M211 221.5H214M199 226.5H214M211 231.5H214M209 236.5H214M211 241.5H214M209 246.5H214M211 251.5H214M209 256.5H214M211 261.5H214M209 266.5H214M211 271.5H214M199 276.5H214M211 281.5H214M209 286.5H214M211 291.5H214M209 296.5H214M211 301.5H214M209 306.5H214M211 311.5H214M209 316.5H214M211 321.5H214M199 326.5H214M211 331.5H214M209 336.5H214M211 341.5H214M209 346.5H214M211 351.5H214M209 356.5H214M211 361.5H214M209 366.5H214M211 371.5H214M199 376.5H214M211 381.5H214M209 386.5H214M211 391.5H214M209 396.5H214M211 401.5H214M209 406.5H214M211 411.5H214M209 416.5H214M211 421.5H214M199 426.5H214M211 431.5H214M209 436.5H214M211 441.5H214M209 446.5H214M211 451.5H214M209 456.5H214M211 461.5H214M209 466.5H214M211 471.5H214M199 476.5H214M211 481.5H214M209 486.5H214M211 491.5H214M209 496.5H214M211 501.5H214M209 506.5H214M211 511.5H214M209 516.5H214M211 521.5H214M199 526.5H214M211 531.5H214M209 536.5H214M211 541.5H214M209 546.5H214M211 551.5H214M209 556.5H214M211 561.5H214M209 566.5H214M211 571.5H214M199 576.5H214M211 581.5H214M209 586.5H214M211 591.5H214M209 596.5H214M211 601.5H214M209 606.5H214M211 611.5H214M209 616.5H214M211 621.5H214M199 626.5H214M211 631.5H214M209 636.5H214M211 641.5H214M209 646.5H214M211 651.5H214M209 656.5H214M211 661.5H214M209 666.5H214M211 671.5H214M199 676.5H214M211 681.5H214M209 686.5H214M211 691.5H214M209 696.5H214M211 701.5H214M209 706.5H214M211 711.5H214M209 716.5H214M211 721.5H214M199 726.5H214M211 731.5H214M209 736.5H214M211 741.5H214M209 746.5H214M211 751.5H214M209 756.5H214M211 761.5H214M209 766.5H214M211 771.5H214M199 776.5H214M211 781.5H214M209 786.5H214M211 791.5H214M209 796.5H214M211 801.5H214M209 806.5H214M211 811.5H214M209 816.5H214M211 821.5H214M199 826.5H214M211 831.5H214M209 836.5H214M211 841.5H214M209 846.5H214M211 851.5H214M209 856.5H214M211 861.5H214M209 866.5H214M211 871.5H214M199 876.5H214M211 881.5H214" stroke="#858585" stroke-width="1"/><rect x="200.2" y="132" width="2.4" height="1.2" fill="#dadada"/><text x="200" y="144.30" font-family="Liberation Sans" font-size="8.6" fill="#dadada">2</text><text x="200" y="153.05" font-family="Liberation Sans" font-size="8.6" fill="#dadada">5</text><text x="200" y="161.80" font-family="Liberation Sans" font-size="8.6" fill="#dadada">0</text><rect x="200.2" y="182" width="2.4" height="1.2" fill="#dadada"/><text x="200" y="194.30" font-family="Liberation Sans" font-size="8.6" fill="#dadada">2</text><text x="200" y="203.05" font-family="Liberation Sans" font-size="8.6" fill="#dadada">0</text><text x="200" y="211.80" font-family="Liberation Sans" font-size="8.6" fill="#dadada">0</text><rect x="200.2" y="232" width="2.4" height="1.2" fill="#dadada"/><text x="200" y="244.30" font-family="Liberation Sans" font-size="8.6" fill="#dadada">1</text><text x="200" y="253.05" font-family="Liberation Sans" font-size="8.6" fill="#dadada">5</text><text x="200" y="261.80" font-family="Liberation Sans" font-size="8.6" fill="#dadada">0</text><rect x="200.2" y="282" width="2.4" height="1.2" fill="#dadada"/><text x="200" y="294.30" font-family="Liberation Sans" font-size="8.6" fill="#dadada">1</text><text x="200" y="303.05" font-family="Liberation Sans" font-size="8.6" fill="#dadada">0</text><text x="200" y="311.80" font-family="Liberation Sans" font-size="8.6" fill="#dadada">0</text><rect x="200.2" y="332" width="2.4" height="1.2" fill="#dadada"/><text x="200" y="344.30" font-family="Liberation Sans" font-size="8.6" fill="#dadada">5</text><text x="200" y="353.05" font-family="Liberation Sans" font-size="8.6" fill="#dadada">0</text><text x="200" y="385.20" font-family="Liberation Sans" font-size="8.6" fill="#dadada">0</text><text x="200" y="435.20" font-family="Liberation Sans" font-size="8.6" fill="#dadada">5</text><text x="200" y="443.95" font-family="Liberation Sans" font-size="8.6" fill="#dadada">0</text><text x="200" y="485.20" font-family="Liberation Sans" font-size="8.6" fill="#dadada">1</text><text x="200" y="493.95" font-family="Liberation Sans" font-size="8.6" fill="#dadada">0</text><text x="200" y="502.70" font-family="Liberation Sans" font-size="8.6" fill="#dadada">0</text><text x="200" y="535.20" font-family="Liberation Sans" font-size="8.6" fill="#dadada">1</text><text x="200" y="543.95" font-family="Liberation Sans" font-size="8.6" fill="#dadada">5</text><text x="200" y="552.70" font-family="Liberation Sans" font-size="8.6" fill="#dadada">0</text><text x="200" y="585.20" font-family="Liberation Sans" font-size="8.6" fill="#dadada">2</text><text x="200" y="593.95" font-family="Liberation Sans" font-size="8.6" fill="#dadada">0</text><text x="200" y="602.70" font-family="Liberation Sans" font-size="8.6" fill="#dadada">0</text><text x="200" y="635.20" font-family="Liberation Sans" font-size="8.6" fill="#dadada">2</text><text x="200" y="643.95" font-family="Liberation Sans" font-size="8.6" fill="#dadada">5</text><text x="200" y="652.70" font-family="Liberation Sans" font-size="8.6" fill="#dadada">0</text><text x="200" y="685.20" font-family="Liberation Sans" font-size="8.6" fill="#dadada">3</text><text x="200" y="693.95" font-family="Liberation Sans" font-size="8.6" fill="#dadada">0</text><text x="200" y="702.70" font-family="Liberation Sans" font-size="8.6" fill="#dadada">0</text><text x="200" y="735.20" font-family="Liberation Sans" font-size="8.6" fill="#dadada">3</text><text x="200" y="743.95" font-family="Liberation Sans" font-size="8.6" fill="#dadada">5</text><text x="200" y="752.70" font-family="Liberation Sans" font-size="8.6" fill="#dadada">0</text><text x="200" y="785.20" font-family="Liberation Sans" font-size="8.6" fill="#dadada">4</text><text x="200" y="793.95" font-family="Liberation Sans" font-size="8.6" fill="#dadada">0</text><text x="200" y="802.70" font-family="Liberation Sans" font-size="8.6" fill="#dadada">0</text><text x="200" y="835.20" font-family="Liberation Sans" font-size="8.6" fill="#dadada">4</text><text x="200" y="843.95" font-family="Liberation Sans" font-size="8.6" fill="#dadada">5</text><text x="200" y="852.70" font-family="Liberation Sans" font-size="8.6" fill="#dadada">0</text><text x="200" y="885.20" font-family="Liberation Sans" font-size="8.6" fill="#dadada">5</text><text x="200" y="893.95" font-family="Liberation Sans" font-size="8.6" fill="#dadada">0</text><text x="200" y="902.70" font-family="Liberation Sans" font-size="8.6" fill="#dadada">0</text></svg>
<!-- canvas -->
<div class="a" style="left:645px;top:378px;width:321px;height:240px;background:#3c3c3c;opacity:.6"></div>
<div class="a" style="left:646px;top:379px;width:319px;height:238px;background:#c8c8c8;border:1px solid #d2d2d2"></div>
<div class="a" style="left:677px;top:457px;font-size:20px;transform:scaleY(1.05);transform-origin:0 0;color:#111;white-space:nowrap">Open %</div>
<div class="a" style="left:772px;top:404px;font-size:20px;transform:scaleY(1.1);transform-origin:0 0;color:#111;white-space:nowrap">##.##</div>
<div class="a" style="left:769px;top:458px;width:81px;height:24px;background:#fff"></div>
<div class="a" style="left:800px;top:461px;width:46px;font-size:14px;color:#111;text-align:right;white-space:nowrap">#.##</div>
<svg class="a" style="left:760px;top:430px" width="100" height="60" viewBox="760 430 100 60">
<path d="M809.5 440V454" stroke="#9fb8f0" stroke-width="1"/>
<rect x="768.5" y="456.5" width="82" height="27" fill="none" stroke="#9fb8f0" stroke-width="1"/>
<circle cx="809.5" cy="436.8" r="3.7" fill="#0b5a14"/>
<g fill="#fff" stroke="#9fb8f0" stroke-width="1">
<rect x="765.5" y="453.5" width="6" height="6"/><rect x="806.5" y="453.5" width="6" height="6"/><rect x="847.5" y="453.5" width="6" height="6"/>
<rect x="765.5" y="466.5" width="6" height="6"/><rect x="847.5" y="466.5" width="6" height="6"/>
<rect x="765.5" y="479.5" width="6" height="6"/><rect x="806.5" y="479.5" width="6" height="6"/><rect x="847.5" y="479.5" width="6" height="6"/>
</g></svg>
<div class="a" style="left:871px;top:568px;width:73px;height:26px;background:#fff;border-radius:3px;box-shadow:0 2px 3px rgba(0,0,0,.28)"></div>
<div class="a" style="left:871px;top:573px;width:73px;text-align:center;font-size:13.5px;color:#111">Confirm</div>
<!-- props -->
<div class="a" style="left:1186px;top:127px;width:202px;height:554px;background:#252526;border-radius:4px;box-shadow:0 2px 5px rgba(0,0,0,.45)"></div>
<div class="a" style="left:1187px;top:127px;width:200px;height:24px;background:#202021;border-radius:4px;box-shadow:0 1px 3px rgba(0,0,0,.5)"><svg class="a" style="left:5px;top:9px" width="14" height="8" viewBox="0 0 14 8"><path d="M1.5 7L7 1.5L12.5 7" fill="none" stroke="#fff" stroke-width="2"/></svg><span class="a" style="left:27px;top:6px;font-size:11px;font-weight:bold;color:#eee;letter-spacing:-0.45px">Transform</span></div>
<div class="a" style="left:1197px;top:159px;font-size:9.5px;font-weight:bold;color:#d0d0d0;white-space:nowrap;letter-spacing:-0.25px">x</div>
<div class="a" style="left:1291px;top:159px;font-size:9.5px;font-weight:bold;color:#d0d0d0;white-space:nowrap;letter-spacing:-0.25px">y</div>
<div class="a" style="left:1199px;top:175px;font-size:13.5px;color:#eee;white-space:nowrap;-webkit-text-stroke:0.25px #eee">124</div>
<div class="a" style="left:1197px;top:192px;width:74px;height:1px;background:#f4f4f4;box-shadow:0 1px 0 rgba(240,240,240,.55)"></div>
<div class="a" style="left:1293px;top:175px;font-size:13.5px;color:#eee;white-space:nowrap;-webkit-text-stroke:0.25px #eee">80</div>
<div class="a" style="left:1291px;top:192px;width:74px;height:1px;background:#f4f4f4;box-shadow:0 1px 0 rgba(240,240,240,.55)"></div>
<div class="a" style="left:1197px;top:209px;font-size:9.5px;font-weight:bold;color:#d0d0d0;white-space:nowrap;letter-spacing:-0.25px">width</div>
<div class="a" style="left:1291px;top:209px;font-size:9.5px;font-weight:bold;color:#d0d0d0;white-space:nowrap;letter-spacing:-0.25px">height</div>
<div class="a" style="left:1199px;top:225px;font-size:13.5px;color:#eee;white-space:nowrap;-webkit-text-stroke:0.25px #eee">80</div>
<div class="a" style="left:1197px;top:242px;width:74px;height:1px;background:#f4f4f4;box-shadow:0 1px 0 rgba(240,240,240,.55)"></div>
<div class="a" style="left:1293px;top:225px;font-size:13.5px;color:#eee;white-space:nowrap;-webkit-text-stroke:0.25px #eee">24</div>
<div class="a" style="left:1291px;top:242px;width:74px;height:1px;background:#f4f4f4;box-shadow:0 1px 0 rgba(240,240,240,.55)"></div>
<div class="a" style="left:1197px;top:259px;font-size:9.5px;font-weight:bold;color:#d0d0d0;white-space:nowrap;letter-spacing:-0.25px">font family</div>
<div class="a" style="left:1192px;top:275px;width:174px;height:19px;border:1px solid #8a8a8a"></div>
<div class="a" style="left:1197px;top:276px;font-size:13px;color:#eee">Sans-serif</div>
<svg class="a" style="left:1351px;top:281px" width="10" height="7" viewBox="0 0 10 7"><path d="M1 1.2L5 5.2L9 1.2" fill="none" stroke="#fff" stroke-width="1.8"/></svg>
<div class="a" style="left:1197px;top:310px;font-size:9.5px;font-weight:bold;color:#d0d0d0;white-space:nowrap;letter-spacing:-0.25px">font size</div>
<div class="a" style="left:1291px;top:310px;font-size:9.5px;font-weight:bold;color:#d0d0d0;white-space:nowrap;letter-spacing:-0.25px">text align</div>
<div class="a" style="left:1199px;top:326px;font-size:13.5px;color:#eee;white-space:nowrap;-webkit-text-stroke:0.25px #eee">14</div>
<div class="a" style="left:1197px;top:343px;width:74px;height:1px;background:#f4f4f4;box-shadow:0 1px 0 rgba(240,240,240,.55)"></div>
<div class="a" style="left:1291px;top:326px;width:75px;height:19px;border:1px solid #8a8a8a"></div>
<div class="a" style="left:1295px;top:327px;font-size:13px;color:#eee">right</div>
<svg class="a" style="left:1351px;top:332px" width="10" height="7" viewBox="0 0 10 7"><path d="M1 1.2L5 5.2L9 1.2" fill="none" stroke="#fff" stroke-width="1.8"/></svg>
<div class="a" style="left:1197px;top:361px;font-size:9.5px;font-weight:bold;color:#d0d0d0;white-space:nowrap;letter-spacing:-0.25px">angle</div>
<div class="a" style="left:1199px;top:377px;font-size:13.5px;color:#eee;white-space:nowrap;-webkit-text-stroke:0.25px #eee">0</div>
<div class="a" style="left:1197px;top:394px;width:74px;height:1px;background:#f4f4f4;box-shadow:0 1px 0 rgba(240,240,240,.55)"></div>
<div class="a" style="left:1187px;top:407px;width:200px;height:24px;background:#202021;border-radius:4px;box-shadow:0 1px 3px rgba(0,0,0,.5)"><svg class="a" style="left:5px;top:9px" width="14" height="8" viewBox="0 0 14 8"><path d="M1.5 7L7 1.5L12.5 7" fill="none" stroke="#fff" stroke-width="2"/></svg><span class="a" style="left:27px;top:6px;font-size:11px;font-weight:bold;color:#eee;letter-spacing:-0.45px">Align</span></div>
<svg class="a" style="left:1190px;top:435px" width="170" height="60" viewBox="1190 435 170 60" fill="#f2f2f2">
<rect x="1196" y="440" width="1.6" height="16"/><rect x="1198.2" y="442.3" width="13" height="6"/><rect x="1198.2" y="449.8" width="9" height="5.4"/>
<rect x="1237.6" y="440" width="1.6" height="17"/><rect x="1232.6" y="442.3" width="11.5" height="6"/><rect x="1235" y="449.8" width="7" height="5.4"/>
<rect x="1277.8" y="440" width="1.6" height="16"/><rect x="1264.3" y="442.3" width="12.6" height="6"/><rect x="1269.2" y="449.8" width="7.6" height="5.4"/>
<rect x="1298" y="440" width="16" height="1.6"/><rect x="1298.5" y="442.5" width="6" height="8.4"/><rect x="1306" y="442.5" width="6" height="12.5"/>
<rect x="1332.3" y="447.4" width="16.5" height="1.6"/><rect x="1335.6" y="445" width="5.5" height="7"/><rect x="1342.6" y="442.5" width="5" height="12.5"/>
<rect x="1196.2" y="487.4" width="16" height="1.6"/><rect x="1197.4" y="479.3" width="6.2" height="7.2"/><rect x="1205.3" y="474.3" width="5" height="12.2"/>
</svg>
<div class="a" style="left:1187px;top:499px;width:200px;height:24px;background:#202021;border-radius:4px;box-shadow:0 1px 3px rgba(0,0,0,.5)"><svg class="a" style="left:5px;top:9px" width="14" height="8" viewBox="0 0 14 8"><path d="M1.5 7L7 1.5L12.5 7" fill="none" stroke="#fff" stroke-width="2"/></svg><span class="a" style="left:27px;top:6px;font-size:11px;font-weight:bold;color:#eee;letter-spacing:-0.45px">Stroke</span></div>
<div class="a" style="left:1187px;top:523px;width:200px;height:24px;background:#202021;border-radius:4px;box-shadow:0 1px 3px rgba(0,0,0,.5)"><svg class="a" style="left:5px;top:9px" width="14" height="8" viewBox="0 0 14 8"><path d="M1.5 7L7 1.5L12.5 7" fill="none" stroke="#fff" stroke-width="2"/></svg><span class="a" style="left:27px;top:6px;font-size:11px;font-weight:bold;color:#eee;letter-spacing:-0.45px">Marker</span></div>
<div class="a" style="left:1187px;top:547px;width:200px;height:24px;background:#202021;border-radius:4px;box-shadow:0 1px 3px rgba(0,0,0,.5)"><svg class="a" style="left:5px;top:9px" width="14" height="8" viewBox="0 0 14 8"><path d="M1.5 7L7 1.5L12.5 7" fill="none" stroke="#fff" stroke-width="2"/></svg><span class="a" style="left:27px;top:6px;font-size:11px;font-weight:bold;color:#eee;letter-spacing:-0.45px">Hyperlink</span></div>
<div class="a" style="left:1187px;top:571px;width:200px;height:24px;background:#202021;border-radius:4px;box-shadow:0 1px 3px rgba(0,0,0,.5)"><svg class="a" style="left:5px;top:9px" width="14" height="8" viewBox="0 0 14 8"><path d="M1.5 7L7 1.5L12.5 7" fill="none" stroke="#fff" stroke-width="2"/></svg><span class="a" style="left:27px;top:6px;font-size:11px;font-weight:bold;color:#eee;letter-spacing:-0.45px">Interactivity</span></div>
<div class="a" style="left:1197px;top:599px;font-size:9.5px;color:#b8b8b8">name</div>
<div class="a" style="left:1199px;top:617px;font-size:13.5px;color:#f2f2f2;-webkit-text-stroke:0.3px #f2f2f2">Open value</div>
<div class="a" style="left:1197px;top:633px;width:173px;height:2px;background:#f0f0f0"></div>
<div class="a" style="left:1197px;top:647px;width:77px;height:28px;background:#6b6b6b;border-radius:4px"></div>
<div class="a" style="left:1197px;top:655px;width:77px;text-align:center;font-size:11.5px;font-weight:bold;color:#f2f2f2;letter-spacing:-0.3px">Property</div>
<!-- bottom -->
<div class="a" style="left:199px;top:887px;width:1205px;height:23px;background:#313131"></div>
<div class="a" style="left:205px;top:889px;width:80px;height:21px;background:#1f2022"></div>
<div class="a" style="left:205px;top:893px;width:80px;text-align:center;font-size:12px;font-weight:bold;color:#eee;letter-spacing:-0.3px">100 %</div>
<div class="a" style="left:301px;top:891px;width:37px;height:17px;background:#3c3c3c"></div>
<div class="a" style="left:302px;top:892px;width:17px;height:15px;background:#fff"></div>
<div class="a" style="left:319px;top:892px;width:18px;height:15px;background:#060606"></div>
<div class="a" style="left:364px;top:892px;width:30px;height:15px;background:#fff"></div>
<svg class="a" style="left:364px;top:892px" width="15" height="15" viewBox="0 0 15 15"><path d="M2 0L13 15M13 0L2 15" stroke="#d0303a" stroke-width="1.6"/></svg>
<div class="a" style="left:394px;top:892px;width:15px;height:15px;background:#050505"></div>
<svg class="a" style="left:424px;top:892px" width="980" height="15" viewBox="424 892 980 15"><rect x="424" y="892" width="15" height="15" fill="#4d4d4f"/><rect x="439" y="892" width="15" height="15" fill="#686868"/><rect x="454" y="892" width="15" height="15" fill="#7f8080"/><rect x="469" y="892" width="15" height="15" fill="#999a99"/><rect x="484" y="892" width="15" height="15" fill="#b2b2b2"/><rect x="499" y="892" width="15" height="15" fill="#cbcccb"/><rect x="514" y="892" width="15" height="15" fill="#e4e4e4"/><rect x="529" y="892" width="15" height="15" fill="#e8e8e8"/><rect x="544" y="892" width="15" height="15" fill="#f8f9fb"/><rect x="559" y="892" width="15" height="15" fill="#171c4e"/><rect x="574" y="892" width="15" height="15" fill="#163a8c"/><rect x="589" y="892" width="15" height="15" fill="#1a46ab"/><rect x="604" y="892" width="15" height="15" fill="#1a63d6"/><rect x="619" y="892" width="15" height="15" fill="#1a73e6"/><rect x="634" y="892" width="15" height="15" fill="#3b89f8"/><rect x="649" y="892" width="15" height="15" fill="#5b9cf2"/><rect x="664" y="892" width="15" height="15" fill="#89b9ee"/><rect x="679" y="892" width="15" height="15" fill="#a9d0f7"/><rect x="694" y="892" width="15" height="15" fill="#1d1450"/><rect x="709" y="892" width="15" height="15" fill="#3a1878"/><rect x="724" y="892" width="15" height="15" fill="#4a209c"/><rect x="739" y="892" width="15" height="15" fill="#5e16cf"/><rect x="754" y="892" width="15" height="15" fill="#6d1fe0"/><rect x="769" y="892" width="15" height="15" fill="#7838de"/><rect x="784" y="892" width="15" height="15" fill="#9370dc"/><rect x="799" y="892" width="15" height="15" fill="#b085ea"/><rect x="814" y="892" width="15" height="15" fill="#c4aef0"/><rect x="829" y="892" width="15" height="15" fill="#1f1a45"/><rect x="844" y="892" width="15" height="15" fill="#3a1a78"/><rect x="859" y="892" width="15" height="15" fill="#421b85"/><rect x="874" y="892" width="15" height="15" fill="#5022a0"/><rect x="889" y="892" width="15" height="15" fill="#8650c0"/><rect x="904" y="892" width="15" height="15" fill="#8050c0"/><rect x="919" y="892" width="15" height="15" fill="#a07ee6"/><rect x="934" y="892" width="15" height="15" fill="#b596ea"/><rect x="949" y="892" width="15" height="15" fill="#c3bbf0"/><rect x="964" y="892" width="15" height="15" fill="#541e2a"/><rect x="979" y="892" width="15" height="15" fill="#7a2a45"/><rect x="994" y="892" width="15" height="15" fill="#93263f"/><rect x="1009" y="892" width="15" height="15" fill="#b43a88"/><rect x="1024" y="892" width="15" height="15" fill="#d93a82"/><rect x="1039" y="892" width="15" height="15" fill="#e05898"/><rect x="1054" y="892" width="15" height="15" fill="#e36a98"/><rect x="1069" y="892" width="15" height="15" fill="#f2aec0"/><rect x="1084" y="892" width="15" height="15" fill="#eeb6d0"/><rect x="1099" y="892" width="15" height="15" fill="#5f1b1b"/><rect x="1114" y="892" width="15" height="15" fill="#5f1b1b"/><rect x="1129" y="892" width="15" height="15" fill="#93243f"/><rect x="1144" y="892" width="15" height="15" fill="#c0303a"/><rect x="1159" y="892" width="15" height="15" fill="#c5333e"/><rect x="1174" y="892" width="15" height="15" fill="#e86d68"/><rect x="1189" y="892" width="15" height="15" fill="#e46b7b"/><rect x="1204" y="892" width="15" height="15" fill="#f3b89a"/><rect x="1219" y="892" width="15" height="15" fill="#f2b0c3"/><rect x="1234" y="892" width="15" height="15" fill="#5a2d0f"/><rect x="1249" y="892" width="15" height="15" fill="#8a4a14"/><rect x="1264" y="892" width="15" height="15" fill="#a8600f"/><rect x="1279" y="892" width="15" height="15" fill="#c76e17"/><rect x="1294" y="892" width="15" height="15" fill="#e6841c"/><rect x="1309" y="892" width="15" height="15" fill="#ee9a38"/><rect x="1324" y="892" width="15" height="15" fill="#efab66"/><rect x="1339" y="892" width="15" height="15" fill="#f6c181"/><rect x="1354" y="892" width="15" height="15" fill="#f6c7a8"/><rect x="1369" y="892" width="15" height="15" fill="#5b2e0d"/><rect x="1384" y="892" width="15" height="15" fill="#8f5b10"/><rect x="1399" y="892" width="15" height="15" fill="#b06c10"/></svg>
<div class="a" style="left:364px;top:908px;width:711px;height:2px;background:#555"></div>
<!-- cursor -->
<svg class="a" style="left:1296px;top:871px" width="14" height="20" viewBox="0 0 14 20"><path d="M1 1V15.5L4.5 12.3L7 18L9.2 17L6.8 11.5H11.5Z" fill="#fff" stroke="#000" stroke-width="1"/></svg>

</body></html>
